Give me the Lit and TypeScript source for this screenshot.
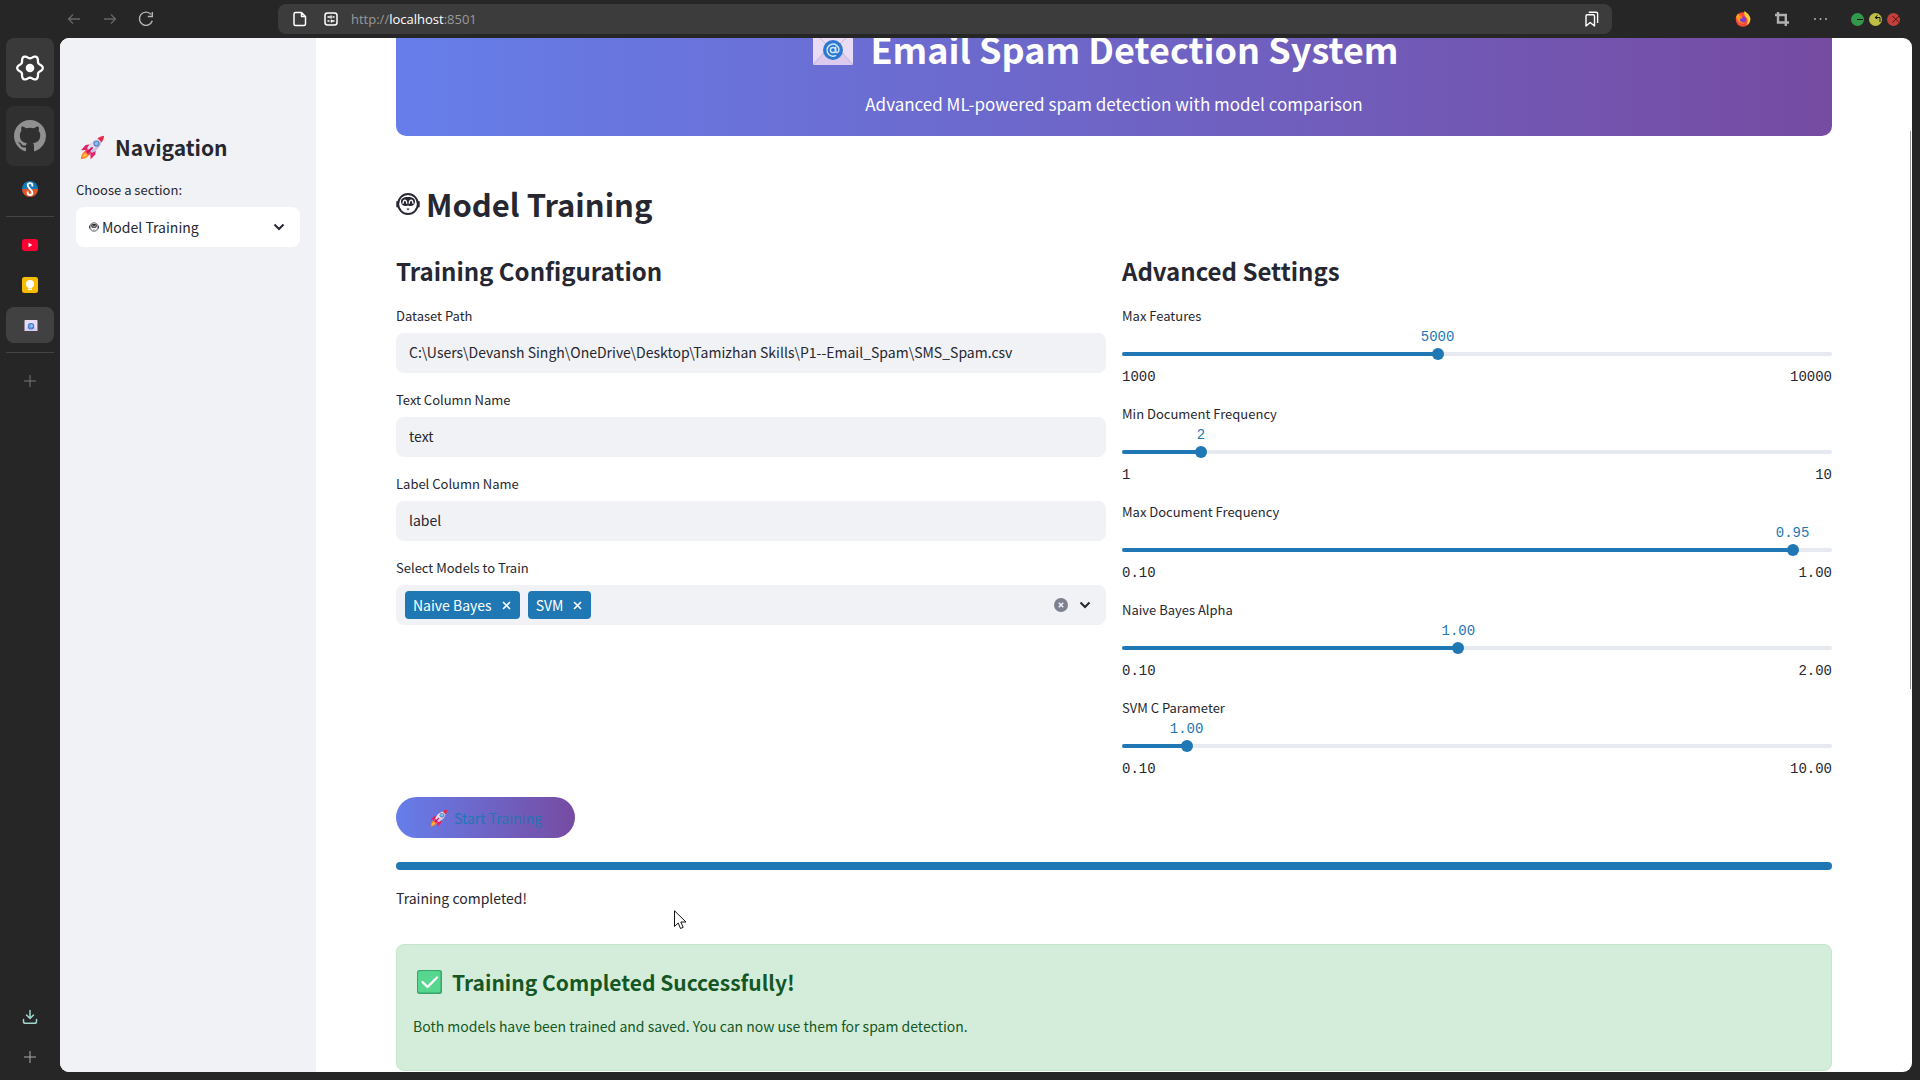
import { LitElement, html, css } from "lit";
import { customElement, property, state } from "lit/decorators.js";

const rocket = html`<svg class="rocket" viewBox="0 0 24 24" aria-hidden="true">
  <path fill="#ff8a1f" d="M5 15Q1 17.500 .8 23.200Q6.500 23 9 19z" />
  <path fill="#ffc44d" d="M4.800 17.500Q3 19 2.600 21.500Q5.200 21 6.800 19.300z" />
  <path fill="#e3206a" d="M10 8.800L5.400 9.600 1 14.600 7 14.400z" />
  <path fill="#e3206a" d="M15.200 14.600L14.600 18.800 10.200 23.200 9.800 17z" />
  <path fill="#e6dcf2" d="M6.200 14.200C8.500 8 13 3.600 19.500 3L21 4.500C20.400 11 16 15.500 9.800 17.800z" />
  <path fill="#cdbfe0" d="M21 4.500C20.400 11 16 15.500 9.800 17.800L8.400 16.400C14 14 18 10.500 20.200 3.700z" />
  <path fill="#ea2a4c" d="M16.800 3.200Q19.800 1 23.200 .8Q23 4.300 20.800 7.200z" />
  <path fill="#f0356f" d="M4.600 15.600L7 12.600 11.400 17 8.400 19.400z" />
  <path stroke="#c9145c" stroke-width="1.800" stroke-linecap="round" d="M11.500 12.500L7.500 16.500" />
  <circle cx="15.800" cy="8.200" r="3" fill="#5a7fb8" />
  <circle cx="15.800" cy="8.200" r="1.900" fill="#7cc0f5" />
</svg>`;

const robot = html`<svg class="robot" viewBox="0 0 24 24" aria-hidden="true" fill="none" stroke="currentColor">
  <ellipse cx="12" cy="12" rx="9.800" ry="10" stroke-width="1.900" />
  <path stroke-width="2" stroke-linecap="round" d="M1.300 10V14.500M22.700 10V14.500" />
  <path fill="currentColor" stroke="none" d="M12 5C16.800 5 19 6.500 19 9.600S17 14 14.600 14 12.800 13.400 12 13.400 11.800 14 9.400 14 5 12.700 5 9.600 7.200 5 12 5z" />
  <path stroke="#fff" stroke-width="1.300" d="M7 11.800Q7.200 8.200 8.900 8.200T10.800 11.800M13.200 11.800Q13.400 8.200 15.100 8.200T17 11.800" />
  <path fill="currentColor" stroke="none" d="M10.500 16.600H13.500L12 18.600z" />
</svg>`;

const mail = html`<svg class="mail" viewBox="0 0 40 34" aria-hidden="true">
  <rect width="40" height="34" rx="2" fill="#eadcf5" />
  <path fill="#dccbee" d="M0 32L15 17H25L40 32Q40 34 38 34H2Q0 34 0 32z" />
  <path fill="none" stroke="#c9b6df" d="M1 1L20 20 39 1M1 33L15 17M39 33L25 17" />
  <circle cx="20" cy="19" r="10" fill="#2f78cf" />
  <g fill="none" stroke="#cfe6ff" stroke-width="1.500" stroke-linecap="round">
    <circle cx="20" cy="19" r="2.600" />
    <path d="M22.600 16.200V20.200Q22.800 21.800 24.200 21.600 26 21 26 18.500A6 6 0 1 0 22.500 24.600" />
  </g>
</svg>`;

const chevron = html`<svg class="chevron" viewBox="0 0 12 8" aria-hidden="true">
  <path d="M1.500 1.500L6 6 10.500 1.500" fill="none" stroke="#262730" stroke-width="2" />
</svg>`;

const plus = html`<svg width="12" height="12" viewBox="0 0 12 12" aria-hidden="true">
  <path d="M6 0V12M0 6H12" stroke="currentColor" />
</svg>`;

// Outline of a six-lobed cog centred in a 30 by 30 box.
const cogOutline = Array.from({ length: 72 }, (_, i) => {
  const a = (i * Math.PI) / 36;
  const r = 11.2 + 1.6 * Math.cos(6 * a);
  return `${(15 + r * Math.cos(a)).toFixed(2)} ${(15 + r * Math.sin(a)).toFixed(2)}`;
}).join("L");

@customElement("range-field")
export class RangeField extends LitElement {
  @property() label = "";
  @property({ type: Number }) min = 0;
  @property({ type: Number }) max = 1;
  @property({ type: Number }) step = 1;
  @property({ type: Number }) value = 0;
  @property({ type: Number }) digits = 0;

  static styles = css`
    :host {
      display: block;
    }
    .label {
      display: block;
      padding-bottom: 2px;
      font-size: 13px;
      line-height: 22px;
    }
    .value,
    .ends {
      font: 14px "Liberation Mono", monospace;
    }
    .value {
      position: relative;
      height: 16px;
    }
    .value output {
      position: absolute;
      line-height: 16px;
      color: #1f77b4;
      transform: translateX(-50%);
    }
    .slot {
      display: grid;
      align-items: center;
      height: 18px;
    }
    .track,
    .slot input {
      grid-area: 1 / 1;
    }
    .track {
      height: 4px;
      border-radius: 2px;
      background: #e6e9ef;
      overflow: hidden;
    }
    .fill {
      height: 100%;
      background: #1f77b4;
    }
    .slot input {
      appearance: none;
      width: calc(100% + 12px);
      height: 12px;
      margin: 0 -6px;
      background: transparent;
    }
    .slot input::-webkit-slider-thumb {
      appearance: none;
      width: 12px;
      height: 12px;
      border-radius: 50%;
      background: #1f77b4;
    }
    .ends {
      display: flex;
      justify-content: space-between;
      padding-top: 4px;
      line-height: 20px;
    }
  `;

  render() {
    const share = ((this.value - this.min) / (this.max - this.min)) * 100;
    return html`
      <label class="label" for="range">${this.label}</label>
      <div class="value">
        <output for="range" style="left:${share}%">${this.value.toFixed(this.digits)}</output>
      </div>
      <div class="slot">
        <div class="track"><div class="fill" style="width:${share}%"></div></div>
        <input
          id="range"
          type="range"
          min=${this.min}
          max=${this.max}
          step=${this.step}
          .value=${String(this.value)}
          @input=${(e: Event) => (this.value = Number((e.target as HTMLInputElement).value))}
        />
      </div>
      <div class="ends">
        <span>${this.min.toFixed(this.digits)}</span>
        <span>${this.max.toFixed(this.digits)}</span>
      </div>
    `;
  }
}

@customElement("app-root")
export class AppRoot extends LitElement {
  @state() models = ["Naive Bayes", "SVM"];

  private fields = [
    { id: "path", label: "Dataset Path", value: "C:\\Users\\Devansh Singh\\OneDrive\\Desktop\\Tamizhan Skills\\P1--Email_Spam\\SMS_Spam.csv" },
    { id: "text", label: "Text Column Name", value: "text" },
    { id: "label", label: "Label Column Name", value: "label" },
  ];

  private ranges = [
    { label: "Max Features", min: 1000, max: 10000, step: 500, value: 5000, digits: 0 },
    { label: "Min Document Frequency", min: 1, max: 10, step: 1, value: 2, digits: 0 },
    { label: "Max Document Frequency", min: 0.1, max: 1, step: 0.01, value: 0.95, digits: 2 },
    { label: "Naive Bayes Alpha", min: 0.1, max: 2, step: 0.1, value: 1, digits: 2 },
    { label: "SVM C Parameter", min: 0.1, max: 10, step: 0.1, value: 1, digits: 2 },
  ];

  static styles = css`
    :host {
      display: block;
      font-family: "Noto Sans CJK SC", "Noto Sans", sans-serif;
      font-size: 14px;
      line-height: 24px;
      color: #262730;
    }
    * {
      box-sizing: border-box;
    }
    h1,
    h2,
    h3,
    p {
      margin: 0;
    }
    h1,
    h2,
    h3 {
      font-weight: 600;
    }
    button,
    input,
    select {
      font: inherit;
      color: inherit;
      border: 0;
      padding: 0;
      background: none;
    }
    svg {
      display: block;
      flex: none;
    }
    .window {
      display: grid;
      grid-template: 38px minmax(0, 1fr) / 60px minmax(0, 1fr);
      height: 100vh;
      background: #262626;
    }

    .toolbar {
      grid-column: 1 / -1;
      display: grid;
      grid-template-columns: 278px minmax(0, 1fr) 308px;
      padding: 4px 0;
    }
    .history,
    .actions {
      display: flex;
      align-items: center;
    }
    .history {
      gap: 20px;
      padding-left: 66px;
      color: #666;
    }
    .history .reload {
      color: #b4b4b4;
    }
    .address {
      display: flex;
      align-items: center;
      gap: 16px;
      padding: 0 13px 0 15px;
      border-radius: 8px;
      background: #3c3c3c;
      color: #fff;
    }
    .url {
      flex: 1;
      margin-left: -4px;
      font: 13px/24px "Open Sans", sans-serif;
      color: #9a9a9a;
    }
    .url b {
      font-weight: 400;
      color: #fff;
    }
    .actions {
      justify-content: flex-end;
      gap: 24px;
      padding-right: 20px;
      color: #b0b0b0;
    }
    .lights {
      display: flex;
      gap: 5px;
    }

    .rail {
      display: flex;
      flex-direction: column;
      align-items: center;
      gap: 4px;
      padding-bottom: 5px;
      color: #777;
    }
    .rail button {
      display: grid;
      place-items: center;
      width: 48px;
      height: 36px;
      border-radius: 8px;
    }
    .rail .pin {
      height: 60px;
      margin-bottom: 4px;
      background: #3a3a3a;
      color: #fff;
    }
    .rail .dim {
      margin-bottom: 1px;
      background: #303030;
      color: #909090;
    }
    .rail .active {
      background: #414141;
    }
    .rail .active .mail {
      width: 14px;
      height: 11px;
      margin-left: 2px;
    }
    .rail hr {
      width: 48px;
      height: 1px;
      margin: 5px 0 6px;
      border: 0;
      background: #444;
    }
    .rail .spacer {
      flex: 1;
    }
    .rail .save {
      color: #9fd6cd;
    }
    .rail .new {
      color: #a8a8a8;
    }

    .view {
      display: grid;
      grid-template-columns: 256px minmax(0, 1fr);
      margin: 0 8px 8px 0;
      border-radius: 9px;
      background: #fff;
      overflow: hidden;
    }
    .side {
      padding: 91px 16px 0;
      background: #f0f2f6;
    }
    .side h2 {
      display: flex;
      align-items: center;
      gap: 10px;
      padding-left: 4px;
      font-size: 21px;
      line-height: 36px;
    }
    .side h2 .rocket {
      width: 25px;
      height: 25px;
    }
    .label {
      display: block;
      margin-bottom: 6px;
      font-size: 13px;
      line-height: 22px;
    }
    .side .label {
      margin-top: 14px;
    }
    .pick {
      display: flex;
      align-items: center;
      gap: 3px;
      height: 40px;
      padding: 0 15px 0 13px;
      border-radius: 8px;
      background: #fff;
    }
    .pick .robot {
      width: 10px;
      height: 10px;
    }
    .pick select {
      appearance: none;
      flex: 1;
      min-width: 0;
    }
    .chevron {
      width: 12px;
      height: 8px;
    }

    .main {
      position: relative;
      min-height: 0;
      padding: 0 80px;
      overflow: hidden;
    }
    .thumb {
      position: absolute;
      top: 9%;
      right: 1px;
      width: 1px;
      height: 54%;
      background: #999;
    }
    .banner {
      margin-top: -46px;
      padding: 32px 32px 18px;
      border-radius: 10px;
      background: linear-gradient(90deg, #667eea, #764ba2);
      color: #fff;
      text-align: center;
    }
    .banner h1 {
      display: flex;
      justify-content: center;
      align-items: center;
      gap: 17px;
      margin-bottom: 18px;
      padding-right: 16px;
      font-size: 36px;
      font-weight: 700;
      line-height: 48px;
    }
    .banner .mail {
      width: 40px;
      height: 34px;
    }
    .banner p {
      font-size: 17px;
      line-height: 28px;
    }
    .title {
      display: flex;
      align-items: center;
      gap: 6px;
      margin-top: 44px;
      font-size: 31px;
      line-height: 48px;
    }
    .title .robot {
      width: 24px;
      height: 24px;
    }
    .columns {
      display: grid;
      grid-template-columns: 1fr 1fr;
      gap: 16px;
      margin-top: 25px;
    }
    .columns h3 {
      margin-bottom: 16px;
      font-size: 24px;
      line-height: 36px;
    }
    .field + .field {
      margin-top: 16px;
    }
    .box {
      display: flex;
      align-items: center;
      width: 100%;
      height: 40px;
      padding: 0 13px 2px;
      border-radius: 8px;
      background: #f0f2f6;
    }
    .multi {
      gap: 8px;
      padding: 0 15px 0 9px;
    }
    .multi input {
      flex: 1;
      min-width: 0;
    }
    .chip {
      display: flex;
      align-items: center;
      gap: 10px;
      height: 28px;
      padding: 0 9px 0 8px;
      border-radius: 4px;
      background: #1f77b4;
      color: #fff;
    }
    .clear {
      margin-right: 3px;
    }
    .ranges {
      display: grid;
      gap: 16px;
    }
    .start {
      display: flex;
      align-items: center;
      gap: 6px;
      height: 41px;
      margin-top: 18px;
      padding: 0 33px 0 34px;
      border-radius: 25px;
      background: linear-gradient(90deg, #667eea, #764ba2);
      color: #1f77b4;
    }
    .start .rocket {
      width: 18px;
      height: 18px;
    }
    progress {
      appearance: none;
      display: block;
      width: 100%;
      height: 8px;
      margin-top: 24px;
      border: 0;
      border-radius: 4px;
      overflow: hidden;
    }
    progress::-webkit-progress-bar {
      background: #f0f2f6;
    }
    progress::-webkit-progress-value {
      background: #1f77b4;
    }
    .state {
      margin-top: 16px;
    }
    .success {
      margin-top: 34px;
      padding: 19px 16px 32px;
      border: 1px solid #c3e6cb;
      border-radius: 8px;
      background: #d4edda;
      color: #155724;
    }
    .success h3 {
      display: flex;
      align-items: center;
      gap: 10px;
      padding-left: 4px;
      margin-bottom: 14px;
      font-size: 21px;
      line-height: 36px;
    }
    .cursor {
      position: absolute;
      left: 358px;
      top: 872px;
    }
  `;

  private remove(model: string) {
    this.models = this.models.filter((m) => m !== model);
  }

  private toolbar() {
    return html`<header class="toolbar">
      <nav class="history">
        <button aria-label="Back">
          <svg width="16" height="12" viewBox="0 0 16 12" fill="none" stroke="currentColor" stroke-width="1.300"><path d="M14 6H3M7 1.500L2.500 6 7 10.500" /></svg>
        </button>
        <button aria-label="Forward">
          <svg width="16" height="12" viewBox="0 0 16 12" fill="none" stroke="currentColor" stroke-width="1.300"><path d="M2 6H13M9 1.500L13.500 6 9 10.500" /></svg>
        </button>
        <button class="reload" aria-label="Reload">
          <svg width="16" height="16" viewBox="0 0 16 16" fill="none" stroke="currentColor" stroke-width="1.400"><path d="M13 3.400A6.600 6.600 0 1 0 14.300 9.800M14.300 1V5.500H9.800" /></svg>
        </button>
      </nav>
      <div class="address">
        <svg width="14" height="16" viewBox="0 0 14 16" fill="none" stroke="currentColor" stroke-width="1.500" stroke-linejoin="round"><path d="M2.500 1.500H8.500L12.500 5.500V13Q12.500 14.500 11 14.500H2.500Q1 14.500 1 13V3Q1 1.500 2.500 1.500zM8.500 1.500V5.500H12.500" /></svg>
        <svg width="16" height="16" viewBox="0 0 16 16" fill="none" stroke="currentColor" stroke-width="1.500"><rect x="2" y="2" width="12" height="12" rx="2.500" /><path d="M4.500 6H7M9.500 6H11.500M8 4.500V7.500M4.500 10H6.500M9 10H11.500M8.500 8.700V11.500" /></svg>
        <span class="url">http://<b>localhost</b>:8501</span>
        <svg width="14" height="16" viewBox="0 0 14 16" fill="none" stroke="currentColor" stroke-width="1.400" stroke-linejoin="round"><path d="M1 15V5Q1 3.800 2.200 3.800H8.300Q9.500 3.800 9.500 5V15L5.200 11.500z" /><path d="M3.800 1.200H11Q12.600 1.200 12.600 2.800V12" /></svg>
      </div>
      <div class="actions">
        <svg width="16" height="16" viewBox="0 0 16 16"><circle cx="8" cy="8.500" r="7.300" fill="#ff4a36" /><path fill="#ff9a1f" d="M1 6Q2 3 3.500 2.500L4.500 4.500 7 5 5 8Q6 12 10 12 4 14 1 6z" /><path fill="#ffd43a" d="M9.500 0Q15.500 4 15.300 9 14.500 13 11.500 14 14 9 11 6 8.500 4 9.500 0z" /><circle cx="8" cy="8.500" r="3" fill="#7a3fd0" /><path fill="#ff7a1f" d="M5 8Q7 8 8 6.500L5.500 5.500z" /></svg>
        <svg width="14" height="14" viewBox="0 0 14 14" fill="none" stroke="currentColor" stroke-width="2.400"><path d="M3 0V10.500H14M0 3H10.800V14" /></svg>
        <svg width="14" height="4" viewBox="0 0 14 4" fill="currentColor"><circle cx="2" cy="2" r="1" /><circle cx="7.500" cy="2" r="1" /><circle cx="13" cy="2" r="1" /></svg>
        <div class="lights">
          <svg width="13" height="13" viewBox="0 0 13 13"><circle cx="6.500" cy="6.500" r="6.500" fill="#319a4a" /><path d="M6 6.500H12" stroke="#111" /></svg>
          <svg width="13" height="13" viewBox="0 0 13 13"><circle cx="6.500" cy="6.500" r="6.500" fill="#bfc043" /><path d="M6 4.500H11V9M8.500 2.500L6 4.500 8.500 6" stroke="#111" fill="none" /></svg>
          <svg width="13" height="13" viewBox="0 0 13 13"><circle cx="6.500" cy="6.500" r="6.500" fill="#c23f3a" /><path d="M5.500 3L12 9.500M12 3L5.500 9.500" stroke="#5a1010" /></svg>
        </div>
      </div>
    </header>`;
  }

  private rail() {
    return html`<nav class="rail">
      <button class="pin" aria-label="Settings">
        <svg width="30" height="30" viewBox="0 0 30 30"><path fill="none" stroke="currentColor" stroke-width="2.300" stroke-linejoin="round" d="M${cogOutline}z" /><circle cx="15" cy="15" r="4.300" fill="currentColor" /></svg>
      </button>
      <button class="pin dim" aria-label="GitHub">
        <svg width="32" height="32" viewBox="0 0 16 16" fill="currentColor"><path d="M8 0C3.580 0 0 3.580 0 8c0 3.540 2.290 6.530 5.470 7.590.4.070.55-.17.55-.38 0-.19-.01-.82-.01-1.490-2.010.37-2.530-.49-2.690-.94-.09-.23-.48-.94-.82-1.130-.28-.15-.68-.52-.01-.53.63-.01 1.080.58 1.230.82.72 1.210 1.870.87 2.330.66.07-.52.28-.87.51-1.070-1.780-.2-3.640-.89-3.640-3.950 0-.87.31-1.590.82-2.150-.08-.2-.36-1.020.08-2.120 0 0 .67-.21 2.200.82.64-.18 1.320-.27 2-.27s1.360.09 2 .27c1.530-1.040 2.200-.82 2.200-.82.44 1.100.16 1.920.08 2.120.51.56.82 1.270.82 2.150 0 3.070-1.870 3.750-3.650 3.950.29.25.54.73.54 1.480 0 1.070-.01 1.930-.01 2.200 0 .21.15.46.55.38A8.010 8.010 0 0 0 16 8c0-4.420-3.580-8-8-8z" /></svg>
      </button>
      <button aria-label="Skills">
        <svg width="16" height="16" viewBox="0 0 16 16"><path fill="#1377b8" d="M0 8A8 8 0 0 1 16 8z" /><path fill="#e0562b" d="M0 8A8 8 0 0 0 16 8z" /><path fill="none" stroke="#fff" stroke-width="1.900" d="M10.300 5.500V4C10.300 1.500 5.700 1.500 5.700 4C5.700 7.500 10.300 8 10.300 12C10.300 14.600 5.700 14.600 5.700 12V10.500" /></svg>
      </button>
      <hr />
      <button aria-label="YouTube">
        <svg width="16" height="12" viewBox="0 0 16 12"><rect width="16" height="12" rx="3" fill="#ff0033" /><path fill="#fff" d="M6.500 3.800L10.300 6 6.500 8.200z" /></svg>
      </button>
      <button aria-label="Keep">
        <svg width="16" height="16" viewBox="0 0 16 16"><rect width="16" height="16" rx="2.500" fill="#fbbc04" /><circle cx="8" cy="7" r="4" fill="#fff" /><path fill="#fff" d="M6 9H10V10.500H6zM6 11.500H10V13H6z" /></svg>
      </button>
      <button class="active" aria-label="Email Spam Detection">${mail}</button>
      <hr />
      <button aria-label="New tab">${plus}</button>
      <span class="spacer"></span>
      <button class="save" aria-label="Downloads">
        <svg width="16" height="16" viewBox="0 0 16 16" fill="none" stroke="currentColor" stroke-width="1.500" stroke-linecap="round"><path d="M8 1.500V9.500M4.500 6L8 9.500 11.500 6M1.500 10.500V12.500Q1.500 14.300 3.300 14.300H12.700Q14.500 14.300 14.500 12.500V10.500" /></svg>
      </button>
      <button class="new" aria-label="New workspace">${plus}</button>
    </nav>`;
  }

  render() {
    return html`<div class="window">
      ${this.toolbar()} ${this.rail()}
      <div class="view">
        <aside class="side">
          <h2>${rocket}Navigation</h2>
          <label class="label" for="section">Choose a section:</label>
          <div class="pick">
            ${robot}
            <select id="section">
              <option>Model Training</option>
            </select>
            ${chevron}
          </div>
        </aside>
        <main class="main">
          <div class="banner">
            <h1>${mail}Email Spam Detection System</h1>
            <p>Advanced ML-powered spam detection with model comparison</p>
          </div>
          <h2 class="title">${robot}Model Training</h2>
          <div class="columns">
            <section>
              <h3>Training Configuration</h3>
              ${this.fields.map(
                (f) => html`<div class="field">
                  <label class="label" for=${f.id}>${f.label}</label>
                  <input class="box" id=${f.id} type="text" .value=${f.value} />
                </div>`
              )}
              <div class="field">
                <label class="label" for="models">Select Models to Train</label>
                <div class="box multi">
                  ${this.models.map(
                    (m) => html`<span class="chip"
                      >${m}
                      <button aria-label="Remove ${m}" @click=${() => this.remove(m)}>
                        <svg width="9" height="9" viewBox="0 0 9 9"><path d="M1 1L8 8M8 1L1 8" stroke="currentColor" stroke-width="1.600" /></svg>
                      </button>
                    </span>`
                  )}
                  <input id="models" type="text" />
                  <button class="clear" aria-label="Clear all" @click=${() => (this.models = [])}>
                    <svg width="14" height="14" viewBox="0 0 14 14"><circle cx="7" cy="7" r="7" fill="#7d808f" /><path d="M4.800 4.800L9.200 9.200M9.200 4.800L4.800 9.200" stroke="#f0f2f6" stroke-width="1.500" /></svg>
                  </button>
                  ${chevron}
                </div>
              </div>
            </section>
            <section>
              <h3>Advanced Settings</h3>
              <div class="ranges">
                ${this.ranges.map(
                  (r) => html`<range-field
                    .label=${r.label}
                    .min=${r.min}
                    .max=${r.max}
                    .step=${r.step}
                    .value=${r.value}
                    .digits=${r.digits}
                  ></range-field>`
                )}
              </div>
            </section>
          </div>
          <button class="start">${rocket}Start Training</button>
          <progress max="100" value="100" aria-label="Training progress"></progress>
          <p class="state">Training completed!</p>
          <div class="success">
            <h3>
              <svg width="25" height="24" viewBox="0 0 25 24" aria-hidden="true"><rect width="25" height="24" rx="2.500" fill="#36a56b" /><rect x="1" y="1" width="22.500" height="21.500" rx="2" fill="#56d68e" /><path d="M5.500 12L10.500 17 20 7.500" fill="none" stroke="#fff" stroke-width="2.400" stroke-linecap="round" stroke-linejoin="round" /></svg>
              Training Completed Successfully!
            </h3>
            <p>Both models have been trained and saved. You can now use them for spam detection.</p>
          </div>
          <div class="thumb"></div>
          <svg class="cursor" width="13" height="20" viewBox="0 0 13 20" aria-hidden="true"><path fill="#fff" stroke="#111" d="M.5 .8V16.500L4.200 13 6.500 18.500 9.200 17.300 6.800 12H12z" /></svg>
        </main>
      </div>
    </div>`;
  }
}
